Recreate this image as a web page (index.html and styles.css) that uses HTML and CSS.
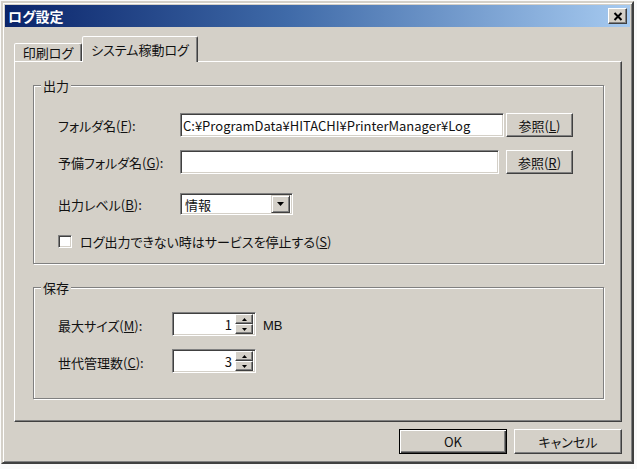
FILE: index.html
```html
<!DOCTYPE html>
<html lang="ja">
<head>
<meta charset="utf-8">
<title>ログ設定</title>
<link rel="stylesheet" href="styles.css">
</head>
<body>
<div class="window">
  <div class="titlebar">
    <span class="title">ログ設定</span>
    <span class="close"><svg width="10" height="9" viewBox="0 0 10 9"><path d="M1.5 1 L8.5 8 M8.5 1 L1.5 8" stroke="#000" stroke-width="2" fill="none"/></svg></span>
  </div>
  <div class="content">
    <div class="tabs">
      <div class="tab tab1">印刷ログ</div>
      <div class="tab active">システム稼動ログ</div>
    </div>
    <div class="panel">
      <div class="group g1">
        <span class="gtitle">出力</span>
        <div class="row r1">
          <span class="lbl lbl1">フォルダ名(<u>F</u>):</span>
          <div class="input w1">C:¥ProgramData¥HITACHI¥PrinterManager¥Log</div>
          <div class="btn ref">参照(<u>L</u>)</div>
        </div>
        <div class="row r2">
          <span class="lbl lbl1">予備フォルダ名(<u>G</u>):</span>
          <div class="input w2"></div>
          <div class="btn ref ref2">参照(<u>R</u>)</div>
        </div>
        <div class="row r3">
          <span class="lbl lbl1">出力レベル(<u>B</u>):</span>
          <div class="input combo">
            <span class="cval">情報</span>
            <span class="dd"><svg width="7" height="4" viewBox="0 0 7 4"><path d="M0 0 H7 L3.5 4 Z" fill="#000"/></svg></span>
          </div>
        </div>
        <div class="row r4">
          <span class="check"></span>
          <span class="cklabel">ログ出力できない時はサービスを停止する(<u>S</u>)</span>
        </div>
      </div>
      <div class="group g2">
        <span class="gtitle">保存</span>
        <div class="row s1">
          <span class="lbl lbl2">最大サイズ(<u>M</u>):</span>
          <div class="input spin">
            <span class="sval">1</span>
            <span class="arrows">
              <span class="ab"><svg width="5" height="3" viewBox="0 0 5 3"><path d="M2.5 0 L5 3 H0 Z" fill="#000"/></svg></span>
              <span class="ab"><svg width="5" height="3" viewBox="0 0 5 3"><path d="M0 0 H5 L2.5 3 Z" fill="#000"/></svg></span>
            </span>
          </div>
          <span class="unit">MB</span>
        </div>
        <div class="row s2">
          <span class="lbl lbl2">世代管理数(<u>C</u>):</span>
          <div class="input spin">
            <span class="sval">3</span>
            <span class="arrows">
              <span class="ab"><svg width="5" height="3" viewBox="0 0 5 3"><path d="M2.5 0 L5 3 H0 Z" fill="#000"/></svg></span>
              <span class="ab"><svg width="5" height="3" viewBox="0 0 5 3"><path d="M0 0 H5 L2.5 3 Z" fill="#000"/></svg></span>
            </span>
          </div>
        </div>
      </div>
    </div>
    <div class="buttons">
      <div class="btn big default">OK</div>
      <div class="btn big">キャンセル</div>
    </div>
  </div>
</div>
</body>
</html>
```
FILE: styles.css
```css
* { box-sizing: border-box; }
html, body { margin: 0; padding: 0; }
body {
  background: #fafafa;
  width: 637px;
  height: 469px;
  overflow: hidden;
  font-family: "Noto Sans CJK JP", "Noto Sans", sans-serif;
  font-size: 13px;
  font-feature-settings: "palt";
  color: #111;
  line-height: 1;
}
u { text-underline-offset: 1px; }

.window {
  margin: 1px 0 0 1px;
  width: 633px;
  height: 463px;
  background: #d4d0c8;
  border: 2px solid;
  border-color: #d4d0c8 #404040 #404040 #d4d0c8;
  box-shadow: inset 1px 1px #fff, inset -1px -1px #808080;
  padding: 2px;
  display: flex;
  flex-direction: column;
}

.titlebar {
  flex: none;
  height: 22px;
  display: flex;
  align-items: center;
  justify-content: space-between;
  padding: 0 3px;
  background: linear-gradient(to right, #0a246a 0%, #3f6aa8 45%, #a6caf0 100%);
}
.title { color: #fff; font-weight: bold; font-size: 14px; }
.close {
  width: 19px;
  height: 16px;
  background: #d4d0c8;
  border: 1px solid;
  border-color: #fff #404040 #404040 #fff;
  box-shadow: inset -1px -1px #808080;
  display: flex;
  align-items: center;
  justify-content: center;
}

.content {
  flex: 1;
  display: flex;
  flex-direction: column;
  padding: 9px 8px 6px 9px;
}

.tabs {
  display: flex;
  align-items: flex-end;
  height: 25px;
  position: relative;
  z-index: 1;
}
.tab {
  height: 18px;
  display: flex;
  align-items: center;
  justify-content: center;
  background: #d4d0c8;
  border: 1px solid;
  border-bottom: none;
  border-color: #fff #404040 transparent #fff;
  box-shadow: inset -1px 0 #808080;
  border-radius: 2px 2px 0 0;
}
.tab1 { width: 68px; }
.tab.active { width: 116px; height: 26px; margin-bottom: -1px; }

.panel {
  height: 361px;
  border: 1px solid;
  border-color: #fff #404040 #404040 #fff;
  box-shadow: inset -1px -1px #808080;
  padding: 23px 17px 0 18px;
}

.group {
  position: relative;
  border: 1px solid #808080;
  box-shadow: 1px 1px #fff, inset 1px 1px #fff;
}
.g1 { height: 179px; padding: 27px 0 0 24px; }
.g2 { height: 112px; margin-top: 23px; padding: 24px 0 0 24px; }
.gtitle {
  position: absolute;
  left: 7px;
  top: -8px;
  padding: 0 2px;
  background: #d4d0c8;
  line-height: 16px;
}

.row { display: flex; align-items: center; }
.r1 { height: 24px; }
.r2 { height: 24px; margin-top: 13px; }
.r3 { height: 22px; margin-top: 19px; }
.r4 { height: 18px; margin-top: 17px; }
.s1 { height: 24px; }
.s2 { height: 24px; margin-top: 13px; }
.s1 .lbl, .s2 .lbl { padding-top: 3px; }

.lbl1 { width: 122px; }
.lbl2 { width: 114px; }

.input {
  height: 100%;
  background: #fff;
  border: 1px solid;
  border-color: #808080 #fff #fff #808080;
  box-shadow: inset 1px 1px #404040, inset -1px -1px #d4d0c8;
  padding: 0 2px;
  display: flex;
  align-items: center;
  white-space: nowrap;
  overflow: hidden;
}
.w1 { width: 324px; }
.w2 { width: 319px; }

.btn {
  display: flex;
  align-items: center;
  justify-content: center;
  background: #d4d0c8;
  border: 1px solid;
  border-color: #fff #404040 #404040 #fff;
  box-shadow: inset -1px -1px #808080;
}
.ref { width: 67px; height: 24px; margin-left: 2px; }
.ref2 { margin-left: 7px; }

.combo { width: 113px; padding: 0 2px 0 4px; justify-content: space-between; }
.dd {
  width: 19px;
  height: 18px;
  background: #d4d0c8;
  border: 1px solid;
  border-color: #d4d0c8 #404040 #404040 #d4d0c8;
  box-shadow: inset 1px 1px #fff, inset -1px -1px #808080;
  display: flex;
  align-items: center;
  justify-content: center;
}

.check {
  width: 14px;
  height: 13px;
  background: #fff;
  border: 1px solid;
  border-color: #808080 #fff #fff #808080;
  box-shadow: inset 1px 1px #404040, inset -1px -1px #d4d0c8;
}
.cklabel { margin-left: 8px; }

.spin { width: 84px; padding: 0 2px 0 3px; justify-content: flex-end; }
.sval { margin-right: 3px; }
.arrows { display: flex; flex-direction: column; width: 18px; height: 20px; }
.ab {
  flex: 1;
  display: flex;
  align-items: center;
  justify-content: center;
  background: #d4d0c8;
  border: 1px solid;
  border-color: #fff #404040 #404040 #fff;
  box-shadow: inset -1px -1px #808080;
}
.unit { margin-left: 7px; padding-top: 3px; font-family: "Liberation Sans", sans-serif; }

.buttons {
  display: flex;
  justify-content: flex-end;
  gap: 7px;
  margin-top: 7px;
}
.big { width: 108px; height: 25px; }
.default {
  border: 1px solid #000;
  box-shadow: inset 1px 1px #fff, inset -1px -1px #404040, inset -2px -2px #808080;
}
```
